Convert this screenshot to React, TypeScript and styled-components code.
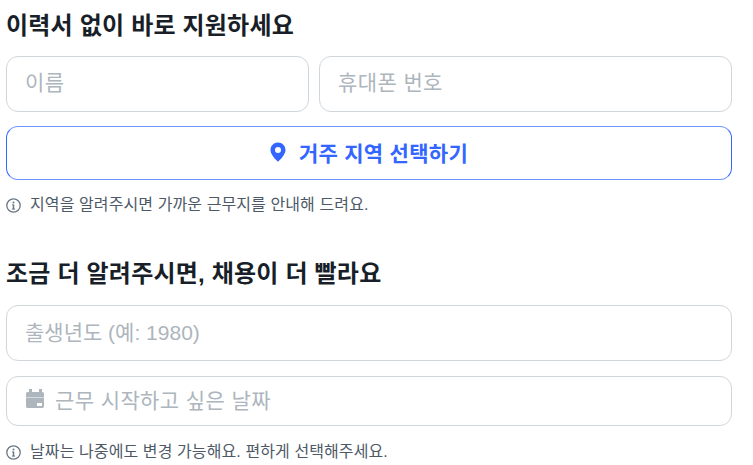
import styled, { createGlobalStyle } from "styled-components";

const GlobalStyle = createGlobalStyle`
  html, body {
    margin: 0;
    padding: 0;
    background: #ffffff;
    overflow: hidden;
  }
  * {
    box-sizing: border-box;
  }
  body {
    font-family: "Liberation Sans", "Noto Sans CJK KR", sans-serif;
  }
`;

function InfoIcon() {
  return (
    <svg width="15" height="15" viewBox="0 0 15 15" fill="none">
      <circle cx="7.500" cy="7.500" r="6.700" stroke="#6b7684" strokeWidth="1.300" />
      <circle cx="7.500" cy="4.500" r="1" fill="#6b7684" />
      <path d="M7.500 6.600v4.500" stroke="#6b7684" strokeWidth="1.500" />
      <path d="M6 6.900h1.500M5.900 11.100h3.200" stroke="#6b7684" strokeWidth="1" />
    </svg>
  );
}

function PinIcon() {
  return (
    <svg width="16" height="20" viewBox="0 0 16 20">
      <path
        fillRule="evenodd"
        fill="#3366ff"
        d="M8 .5C3.800.5.500 3.800.500 7.900c0 3.200 2.400 7 7.500 11.800 5.100-4.800 7.500-8.600 7.500-11.800C15.500 3.800 12.200.5 8 .5zm0 4.500a3 3 0 1 1 0 6 3 3 0 0 1 0-6z"
      />
    </svg>
  );
}

function CalendarIcon() {
  return (
    <svg width="18" height="20" viewBox="0 0 18 20">
      <path
        fillRule="evenodd"
        fill="#adb5bd"
        d="M3 0h3v3h7V0h3v3h.2C17.200 3 18 3.800 18 4.800v3.500H0V4.800C0 3.800.8 3 1.800 3H3zM0 8.800h18v8.400c0 1-.8 1.800-1.800 1.800H1.800C.8 19 0 18.200 0 17.200zm11 5.200v3h5v-3z"
      />
    </svg>
  );
}

export default function App() {
  return (
    <>
      <GlobalStyle />
      <Page>
        <Section>
          <Heading>이력서 없이 바로 지원하세요</Heading>
          <Row>
            <TextInput placeholder="이름" />
            <TextInput placeholder="휴대폰 번호" />
          </Row>
          <LocationButton type="button">
            <PinIcon />
            거주 지역 선택하기
          </LocationButton>
          <Hint>
            <InfoIcon />
            지역을 알려주시면 가까운 근무지를 안내해 드려요.
          </Hint>
        </Section>
        <Section>
          <Heading $gap={15}>조금 더 알려주시면, 채용이 더 빨라요</Heading>
          <TextInput $tracking={0} placeholder="출생년도 (예: 1980)" />
          <DateField>
            <CalendarIcon />
            근무 시작하고 싶은 날짜
          </DateField>
          <Hint $top={15}>
            <InfoIcon />
            날짜는 나중에도 변경 가능해요. 편하게 선택해주세요.
          </Hint>
        </Section>
      </Page>
    </>
  );
}

const Page = styled.div`
  display: flex;
  flex-direction: column;
  gap: 42px;
  width: 726px;
  margin-left: 6px;
  padding-top: 10px;
`;

const Section = styled.section`
  display: flex;
  flex-direction: column;
`;

const Heading = styled.h2<{ $gap?: number }>`
  margin: 0 0 ${({ $gap = 14 }) => $gap}px;
  font-size: 24px;
  line-height: 32px;
  font-weight: 700;
  letter-spacing: 0.2px;
  color: #191f28;
`;

const Row = styled.div`
  display: grid;
  grid-template-columns: 303fr 413fr;
  gap: 10px;

  input {
    padding-bottom: 2px;
  }
`;

const TextInput = styled.input<{ $tracking?: number }>`
  width: 100%;
  min-width: 0;
  height: 56px;
  padding: 0 18px;
  border: 1px solid #d1d6db;
  border-radius: 12px;
  background: #ffffff;
  font-family: inherit;
  font-size: 21px;
  letter-spacing: ${({ $tracking = 0.4 }) => $tracking}px;
  outline: none;

  &::placeholder {
    color: #adb5bd;
    opacity: 1;
  }
`;

const LocationButton = styled.button`
  display: flex;
  align-items: center;
  justify-content: center;
  gap: 13px;
  width: 100%;
  height: 54px;
  margin-top: 14px;
  padding: 0 0 2px;
  border: 1px solid #3366ff;
  border-top-color: #6e92ff;
  border-bottom-color: #6e92ff;
  border-radius: 12px;
  background: #ffffff;
  color: #3366ff;
  font-family: inherit;
  font-size: 21px;
  font-weight: 700;
  letter-spacing: 0.3px;
`;

const DateField = styled.div`
  display: flex;
  align-items: center;
  gap: 11px;
  height: 50px;
  margin-top: 15px;
  padding: 0 19px 4px;
  border: 1px solid #d1d6db;
  border-radius: 12px;
  color: #adb5bd;
  font-size: 21px;
  letter-spacing: 0.4px;
`;

const Hint = styled.p<{ $top?: number }>`
  display: flex;
  align-items: center;
  gap: 9px;
  margin: ${({ $top = 14 }) => $top}px 0 0;
  font-size: 16px;
  line-height: 22px;
  letter-spacing: 0.1px;
  color: #4e5968;
`;
